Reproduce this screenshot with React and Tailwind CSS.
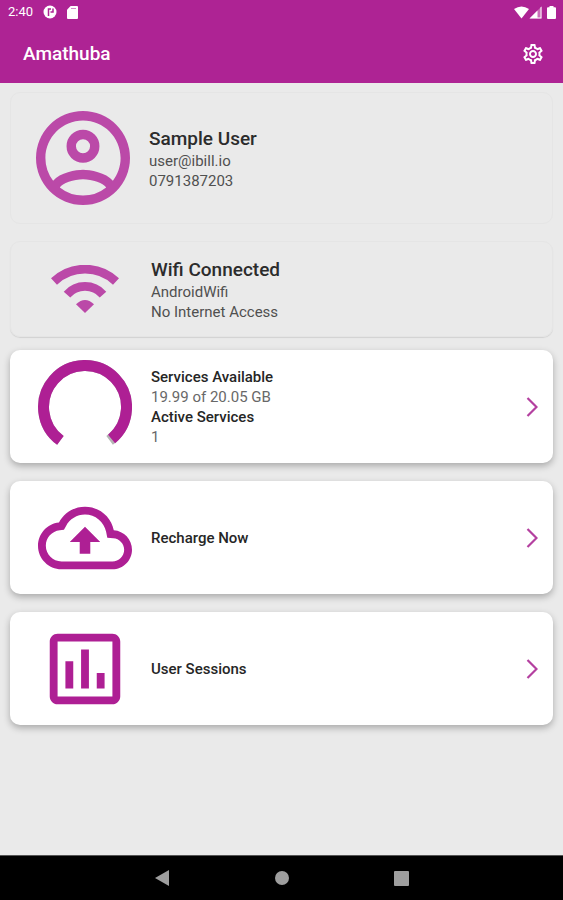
import React from 'react';
import { MdOutlineSettings } from 'react-icons/md';

const AccountIcon = () => (
  <svg viewBox="2 2 20 20" className="w-[94px] h-[94px]" fill="currentColor" aria-hidden="true">
    <path d="M12 2A10 10 0 0 0 2 12a10 10 0 0 0 10 10 10 10 0 0 0 10-10A10 10 0 0 0 12 2M7.07 18.28c.43-.9 3.05-1.78 4.93-1.78s4.5.88 4.93 1.78A7.9 7.9 0 0 1 12 20a7.9 7.9 0 0 1-4.93-1.72m11.29-1.45c-1.43-1.74-4.9-2.33-6.36-2.33s-4.93.59-6.36 2.33A7.93 7.93 0 0 1 4 12c0-4.41 3.59-8 8-8s8 3.59 8 8c0 1.82-.62 3.5-1.64 4.83M12 6a3.5 3.5 0 1 0 0 7 3.5 3.5 0 0 0 0-7m0 5a1.5 1.5 0 1 1 0-3 1.5 1.5 0 0 1 0 3" />
  </svg>
);

const WifiIcon = () => (
  <svg viewBox="0 0 68 48" className="w-[68px] h-12" fill="none" stroke="currentColor" strokeWidth="8.7" aria-hidden="true">
    <path d="M3 16.5A45 45 0 0 1 65 16.5" />
    <path d="M16 29.6A24 24 0 0 1 52 29.6" />
    <path d="M34 48L25 39.3Q34 30.5 43 39.3Z" fill="currentColor" stroke="none" />
  </svg>
);

const UsageGauge = () => (
  <svg viewBox="0 0 94 94" className="w-[94px] h-[94px]" fill="none" strokeWidth="11" role="img" aria-label="Data remaining">
    <path d="M22.4 80.4A41.5 41.5 0 1 1 71.6 80.4" stroke="#b5b5b5" />
    <path d="M22.4 80.4A41.5 41.5 0 1 1 73.6 78.9" stroke="currentColor" />
  </svg>
);

const CloudIcon = () => (
  <svg viewBox="0 0 24 24" className="w-[94px] h-[94px]" fill="currentColor" aria-hidden="true">
    <path d="M19.35 10.04C18.67 6.59 15.64 4 12 4 9.11 4 6.6 5.64 5.35 8.04 2.34 8.36 0 10.91 0 14c0 3.31 2.69 6 6 6h13c2.76 0 5-2.24 5-5 0-2.64-2.05-4.78-4.65-4.96zM19 18H6c-2.21 0-4-1.79-4-4 0-2.05 1.53-3.76 3.56-3.97l1.07-.11.5-.95C8.08 7.14 9.94 6 12 6c2.62 0 4.88 1.86 5.39 4.43l.3 1.5 1.53.11c1.56.1 2.78 1.41 2.78 2.96 0 1.65-1.35 3-3 3zM8.1 13h2.55v3h2.7v-3h2.55L12 9.1z" />
  </svg>
);

const SessionsIcon = () => (
  <svg viewBox="0 0 24 24" className="w-[94px] h-[94px]" fill="currentColor" aria-hidden="true">
    <path d="M19 3H5c-1.1 0-2 .9-2 2v14c0 1.1.9 2 2 2h14c1.1 0 2-.9 2-2V5c0-1.1-.9-2-2-2zm0 16H5V5h14v14zM7 10h2v7H7zM11 7h2v10h-2zM15 13h2v4h-2z" />
  </svg>
);

const StatusBar = () => (
  <div className="flex items-center justify-between h-6 pl-2 pr-[7px]">
    <div className="flex items-center gap-[10px]">
      <span className="text-[13px] leading-6">2:40</span>
      <svg viewBox="0 0 14 14" className="w-[14px] h-[14px]" aria-hidden="true">
        <circle cx="7" cy="7" r="6.5" fill="currentColor" />
        <path d="M5.5 11V4H8M10 3.500v3.500H7.500" fill="none" stroke="#ae2394" strokeWidth="1.5" />
      </svg>
      <svg viewBox="0 0 11 13" className="w-[11px] h-[13px]" aria-hidden="true">
        <path d="M3.6 0H10a1 1 0 0 1 1 1v11a1 1 0 0 1-1 1H1a1 1 0 0 1-1-1V3.8z" fill="currentColor" />
        <path d="M4 2.5h5" stroke="#d689c9" />
      </svg>
    </div>
    <div className="flex items-center" aria-hidden="true">
      <svg viewBox="0 0 15 13" className="w-[15px] h-[13px]">
        <path d="M0 3Q7.5-2 15 3L7.5 12.5z" fill="currentColor" />
      </svg>
      <svg viewBox="0 0 13 13" className="w-[13px] h-[13px]">
        <path d="M.5 12.5L12.5.5v12z" fill="currentColor" fillOpacity=".35" />
        <path d="M.5 12.5L8.5 4.5v8zM11.5 1.5l1-1v12h-4v-1h3z" fill="currentColor" />
      </svg>
      <svg viewBox="0 0 9 13" className="w-[9px] h-[13px] ml-[5px]">
        <path d="M2.5 0h4v1.2H8a1 1 0 0 1 1 1V12a1 1 0 0 1-1 1H1a1 1 0 0 1-1-1V2.200a1 1 0 0 1 1-1h1.500z" fill="currentColor" />
      </svg>
    </div>
  </div>
);

const InfoCard = ({ icon, title, lines, className }) => (
  <section className={`flex items-center gap-[19px] pr-4 rounded-[10px] border border-[#e5e5e5] text-[#505050] ${className}`}>
    <div className="w-[94px] shrink-0 flex justify-center text-[#bb49a8]">{icon}</div>
    <div className="pt-[2px] text-[15px] leading-5">
      <h2 className="text-[19px] leading-6 font-medium text-[#2c2c2c]">{title}</h2>
      {lines.map((line) => (
        <p key={line}>{line}</p>
      ))}
    </div>
  </section>
);

const ActionCard = ({ icon, href, children }) => (
  <a
    href={href}
    className="flex items-center gap-[19px] h-[113px] pl-7 pr-[15px] rounded-[10px] bg-white shadow-[0_3px_7px_rgba(0,0,0,0.28)]"
  >
    <div className="w-[94px] shrink-0 flex justify-center text-[#ae1f94]">{icon}</div>
    <div className="flex-1 text-[15px] leading-5 text-[#686868]">{children}</div>
    <svg viewBox="0 0 12 20" className="w-3 h-5 text-[#b440a0]" fill="none" stroke="currentColor" strokeWidth="2.2" aria-hidden="true">
      <path d="M1.5 1L10.5 10L1.5 19" />
    </svg>
  </a>
);

const labelStyles = 'font-medium text-[#262626]';

const App = () => {
  return (
    <div className="min-h-screen flex flex-col bg-[#eaeaea] font-['Roboto',sans-serif]">
      <header className="bg-[#ae2394] text-white">
        <StatusBar />
        <div className="flex items-center justify-between h-[59px] pl-[23px] pr-[18px]">
          <h1 className="text-[19px] leading-6 font-medium">Amathuba</h1>
          <button type="button" aria-label="Settings">
            <MdOutlineSettings size={24} />
          </button>
        </div>
      </header>

      <main className="flex-1 flex flex-col px-[10px] pt-[9px] pb-6">
        <InfoCard
          className="h-[132px] pl-[25px]"
          icon={<AccountIcon />}
          title="Sample User"
          lines={['user@ibill.io', '0791387203']}
        />
        <InfoCard
          className="mt-[17px] h-24 pl-[27px] shadow-[0_1px_1px_rgba(0,0,0,0.1)]"
          icon={<WifiIcon />}
          title="Wifi Connected"
          lines={['AndroidWifi', 'No Internet Access']}
        />

        <div className="mt-[13px] flex flex-col gap-[18px]">
          <ActionCard href="#services" icon={<UsageGauge />}>
            <p className={labelStyles}>Services Available</p>
            <p>19.99 of 20.05 GB</p>
            <p className={labelStyles}>Active Services</p>
            <p>1</p>
          </ActionCard>
          <ActionCard href="#recharge" icon={<CloudIcon />}>
            <p className={labelStyles}>Recharge Now</p>
          </ActionCard>
          <ActionCard href="#sessions" icon={<SessionsIcon />}>
            <p className={labelStyles}>User Sessions</p>
          </ActionCard>
        </div>
      </main>

      {/* system navigation */}
      <nav className="h-[45px] flex justify-center bg-black border-t border-[#555] text-[#9e9e9e]">
        <button type="button" aria-label="Back" className="w-[120px] flex items-center justify-center">
          <svg viewBox="0 0 14 16" className="w-[14px] h-4">
            <path d="M0 8L14 0v16z" fill="currentColor" />
          </svg>
        </button>
        <button type="button" aria-label="Home" className="w-[120px] flex items-center justify-center">
          <span className="w-[14px] h-[14px] rounded-full bg-[#9e9e9e]" />
        </button>
        <button type="button" aria-label="Recent apps" className="w-[120px] flex items-center justify-center">
          <span className="w-[15px] h-[15px] rounded-[1px] bg-[#9e9e9e]" />
        </button>
      </nav>
    </div>
  );
};

export default App;
